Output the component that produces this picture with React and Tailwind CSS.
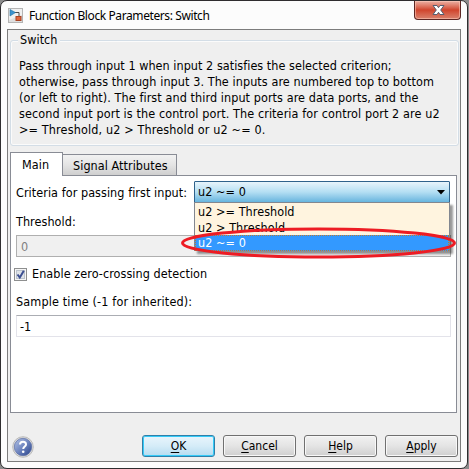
import React from 'react';

const description = [
  ['Pass through input 1 when input 2 satisfies the selected criterion;', 'tracking-[0.04px]'],
  ['otherwise, pass through input 3. The inputs are numbered top to bottom', 'tracking-[0.08px]'],
  ['(or left to right). The first and third input ports are data ports, and the', 'tracking-[0.08px]'],
  ['second input port is the control port. The criteria for control port 2 are u2', 'tracking-[0.1px]'],
  ['>= Threshold, u2 > Threshold or u2 ~= 0.', 'tracking-[0.14px]'],
];

function BlockIcon() {
  return (
    <svg width="15" height="15" viewBox="0 0 15 15" className="block shrink-0">
      <rect x=".5" y=".5" width="14" height="14" fill="#dedede" stroke="#b4b4b4" />
      <path d="M1 1h13v6L1 12z" fill="#f0f0f0" />
      <path d="M6 4.5h5V9" fill="none" stroke="#4a4a4a" />
      <path d="M2 1.5L7.5 4.5L2 8z" fill="#3a93cf" stroke="#23719f" strokeWidth=".6" />
      <rect x="8" y="8.5" width="5" height="4" fill="#e0673c" stroke="#a94323" />
    </svg>
  );
}

function CloseButton() {
  return (
    <div className="h-[19px] w-[47px] shrink-0 rounded-b-[4px] border border-t-0 border-[#5c2623] bg-linear-to-b from-[#eab0a4] via-[#d0442c] via-50% to-[#d9806c] shadow-[inset_0_0_0_1px_rgba(255,205,190,0.55)]">
      <svg width="45" height="18" viewBox="0 0 45 18" className="block">
        <path d="M18 4.5h4l1.5 2.2L25 4.5h4L25.7 9L29 13.500h-4l-1.500-2.200L22 13.500h-4L21.300 9z" fill="#fff" stroke="#575e70" strokeWidth="1" />
      </svg>
    </div>
  );
}

function HelpIcon() {
  return (
    <svg width="22" height="22" viewBox="0 0 22 22" className="block">
      <defs>
        <linearGradient id="ball" x1="0" y1="0" x2="1" y2="1">
          <stop offset="0" stopColor="#b5c4e6" />
          <stop offset=".5" stopColor="#6f86c0" />
          <stop offset="1" stopColor="#243f87" />
        </linearGradient>
      </defs>
      <circle cx="11" cy="11" r="10.300" fill="#dcdcdc" stroke="#b0b0b0" strokeWidth=".8" />
      <circle cx="11" cy="11" r="8.700" fill="url(#ball)" stroke="#5c6fa5" strokeWidth=".7" />
      <path d="M8 8.600C8 6.800 9.200 5.700 11 5.700S14 6.800 14 8.400C14 10.400 11.200 10.500 11.200 13" fill="none" stroke="#fff" strokeWidth="2" />
      <circle cx="11.200" cy="15.800" r="1.300" fill="#fff" />
    </svg>
  );
}

function Button({ label, primary, gap }) {
  const look = primary
    ? 'border-[#317fa8] bg-linear-to-b from-[#e9f5fc] via-[#d5ecf8] via-50% to-[#b5dcf0] shadow-[inset_0_0_0_1px_#35cbf8]'
    : 'border-[#707070] bg-linear-to-b from-[#f2f2f2] via-[#e4e4e4] via-50% to-[#cfcfcf] shadow-[inset_0_0_0_1px_#f8f8f8]';
  return (
    <div className={`h-[22px] w-[73px] shrink-0 rounded-[3px] border text-center text-[12px] leading-[21px] ${gap} ${look}`}>
      <span className="underline underline-offset-2">{label[0]}</span>
      {label.slice(1)}
    </div>
  );
}

export default function App() {
  return (
    <div className="h-[469px] w-[469px] overflow-hidden bg-[#8b8b8b] font-['DejaVu_Sans_Condensed','DejaVu_Sans',sans-serif] text-[12.5px] tracking-[0.06px] whitespace-nowrap text-black [font-stretch:condensed]">
      <div className="flex h-[469px] w-[468px] flex-col rounded-[7px] border border-[#2f2d2f] bg-[#fcfcfc] px-[6px] pb-[6px]">
        <header className="flex h-[28px] shrink-0 items-start justify-between">
          <div className="flex items-center pt-[7px] pl-px">
            <BlockIcon />
            <span className="ml-[6px] font-['Noto_Sans',sans-serif] text-[12px] leading-[15px] tracking-[-0.4px]">Function Block Parameters: Switch</span>
          </div>
          <CloseButton />
        </header>

        <main className="flex min-h-0 flex-1 flex-col border border-[#7c7c7c] bg-[#efefef] pl-[2px]">
          <section className="mt-[10px] h-[106px] w-[449px] shrink-0 rounded-[3px] border border-[#d3dde6] shadow-[inset_0_0_0_1px_#fbfbfb]">
            <div className="-mt-[9px] ml-[7px] h-4 w-[42px] bg-[#efefef] pl-[2px] leading-4">Switch</div>
            <div className="mt-[10px] ml-[8px]">
              {description.map(([text, tracking]) => (
                <div key={text} className={`h-4 leading-4 ${tracking}`}>{text}</div>
              ))}
            </div>
          </section>

          <div className="mt-[6px] flex h-[23px] shrink-0 items-end">
            <div className="z-10 -mb-px h-[24px] w-[53px] border border-b-0 border-[#898c95] bg-white pl-[11px] leading-[24px]">Main</div>
            <div className="-mb-px h-[22px] w-[114px] border border-l-0 border-[#898c95] bg-linear-to-b from-[#f2f2f2] via-[#e4e4e4] via-50% to-[#cfcfcf] pl-[10px] leading-[21px]">Signal Attributes</div>
          </div>

          <section className="flex h-[238px] w-[447px] shrink-0 flex-col border border-[#898c95] bg-white pl-[5px]">
            <div className="mt-[5px] flex h-[22px] shrink-0">
              <span className="w-[178px] leading-[23px]">Criteria for passing first input:</span>
              <div className="relative w-[256px]">
                <div className="flex h-[22px] items-center justify-between rounded-[1px] border border-[#2f628b] bg-linear-to-b from-[#e7f4fb] via-[#b4dff3] via-50% to-[#67b5de] pr-[4px] pl-[3px]">
                  <span>u2 ~= 0</span>
                  <svg width="8" height="5" viewBox="0 0 8 5"><path d="M0 0h8L4 4.500z" fill="#000" /></svg>
                </div>
                <div className="absolute top-[21px] left-0 z-20 w-[256px] border border-[#828790] border-b-0 bg-[#fff4df] shadow-[3px_3px_2px_rgba(0,0,0,0.4)]">
                  <div className="h-4 pl-[3px] leading-[17px]">u2 &gt;= Threshold</div>
                  <div className="h-4 pl-[3px] leading-[17px]">u2 &gt; Threshold</div>
                  <div className="h-4 border border-dotted border-[#b87a35] bg-[#3399ff] pl-[2px] leading-[14px] text-white">u2 ~= 0</div>
                </div>
                <svg width="276" height="32" viewBox="0 0 276 32" className="absolute top-[46px] -left-[13px] z-30">
                  <ellipse cx="137.500" cy="16" rx="136" ry="14" fill="none" stroke="#ed1c24" strokeWidth="3" />
                </svg>
              </div>
            </div>
            <div className="mt-[10px] h-[22px] leading-[17px]">Threshold:</div>
            <div className="h-[22px] w-[435px] shrink-0 border border-[#afafaf] bg-[#f0f0f0] pl-[4px] leading-[21px] text-[#808080]">0</div>
            <div className="mt-[11px] -ml-[2px] flex h-[13px] items-center">
              <svg width="13" height="13" viewBox="0 0 13 13" className="block">
                <rect x=".5" y=".5" width="12" height="12" fill="#f6f6f6" stroke="#8e8f8f" />
                <rect x="2.500" y="2.500" width="8" height="8" fill="#dfe3e8" stroke="#bcc3cc" />
                <path d="M3.500 6.500L5.800 9.500L9.800 2.800" fill="none" stroke="#3c4f91" strokeWidth="2" />
              </svg>
              <span className="ml-[5px]">Enable zero-crossing detection</span>
            </div>
            <div className="mt-[12px] h-[22px] leading-[17px] tracking-[0.15px]">Sample time (-1 for inherited):</div>
            <div className="h-[22px] w-[435px] shrink-0 border border-[#e3e3ea] border-t-[#abadb3] bg-white pl-[3px] leading-[21px]">-1</div>
          </section>

          <footer className="mt-[22px] flex h-[24px] shrink-0 tracking-normal">
            <div className="w-[132px] pt-px pl-[2px]"><HelpIcon /></div>
            <Button label="OK" primary gap="" />
            <Button label="Cancel" gap="ml-[8px]" />
            <Button label="Help" gap="ml-[8px]" />
            <Button label="Apply" gap="ml-[8px]" />
          </footer>
        </main>
      </div>
    </div>
  );
}
